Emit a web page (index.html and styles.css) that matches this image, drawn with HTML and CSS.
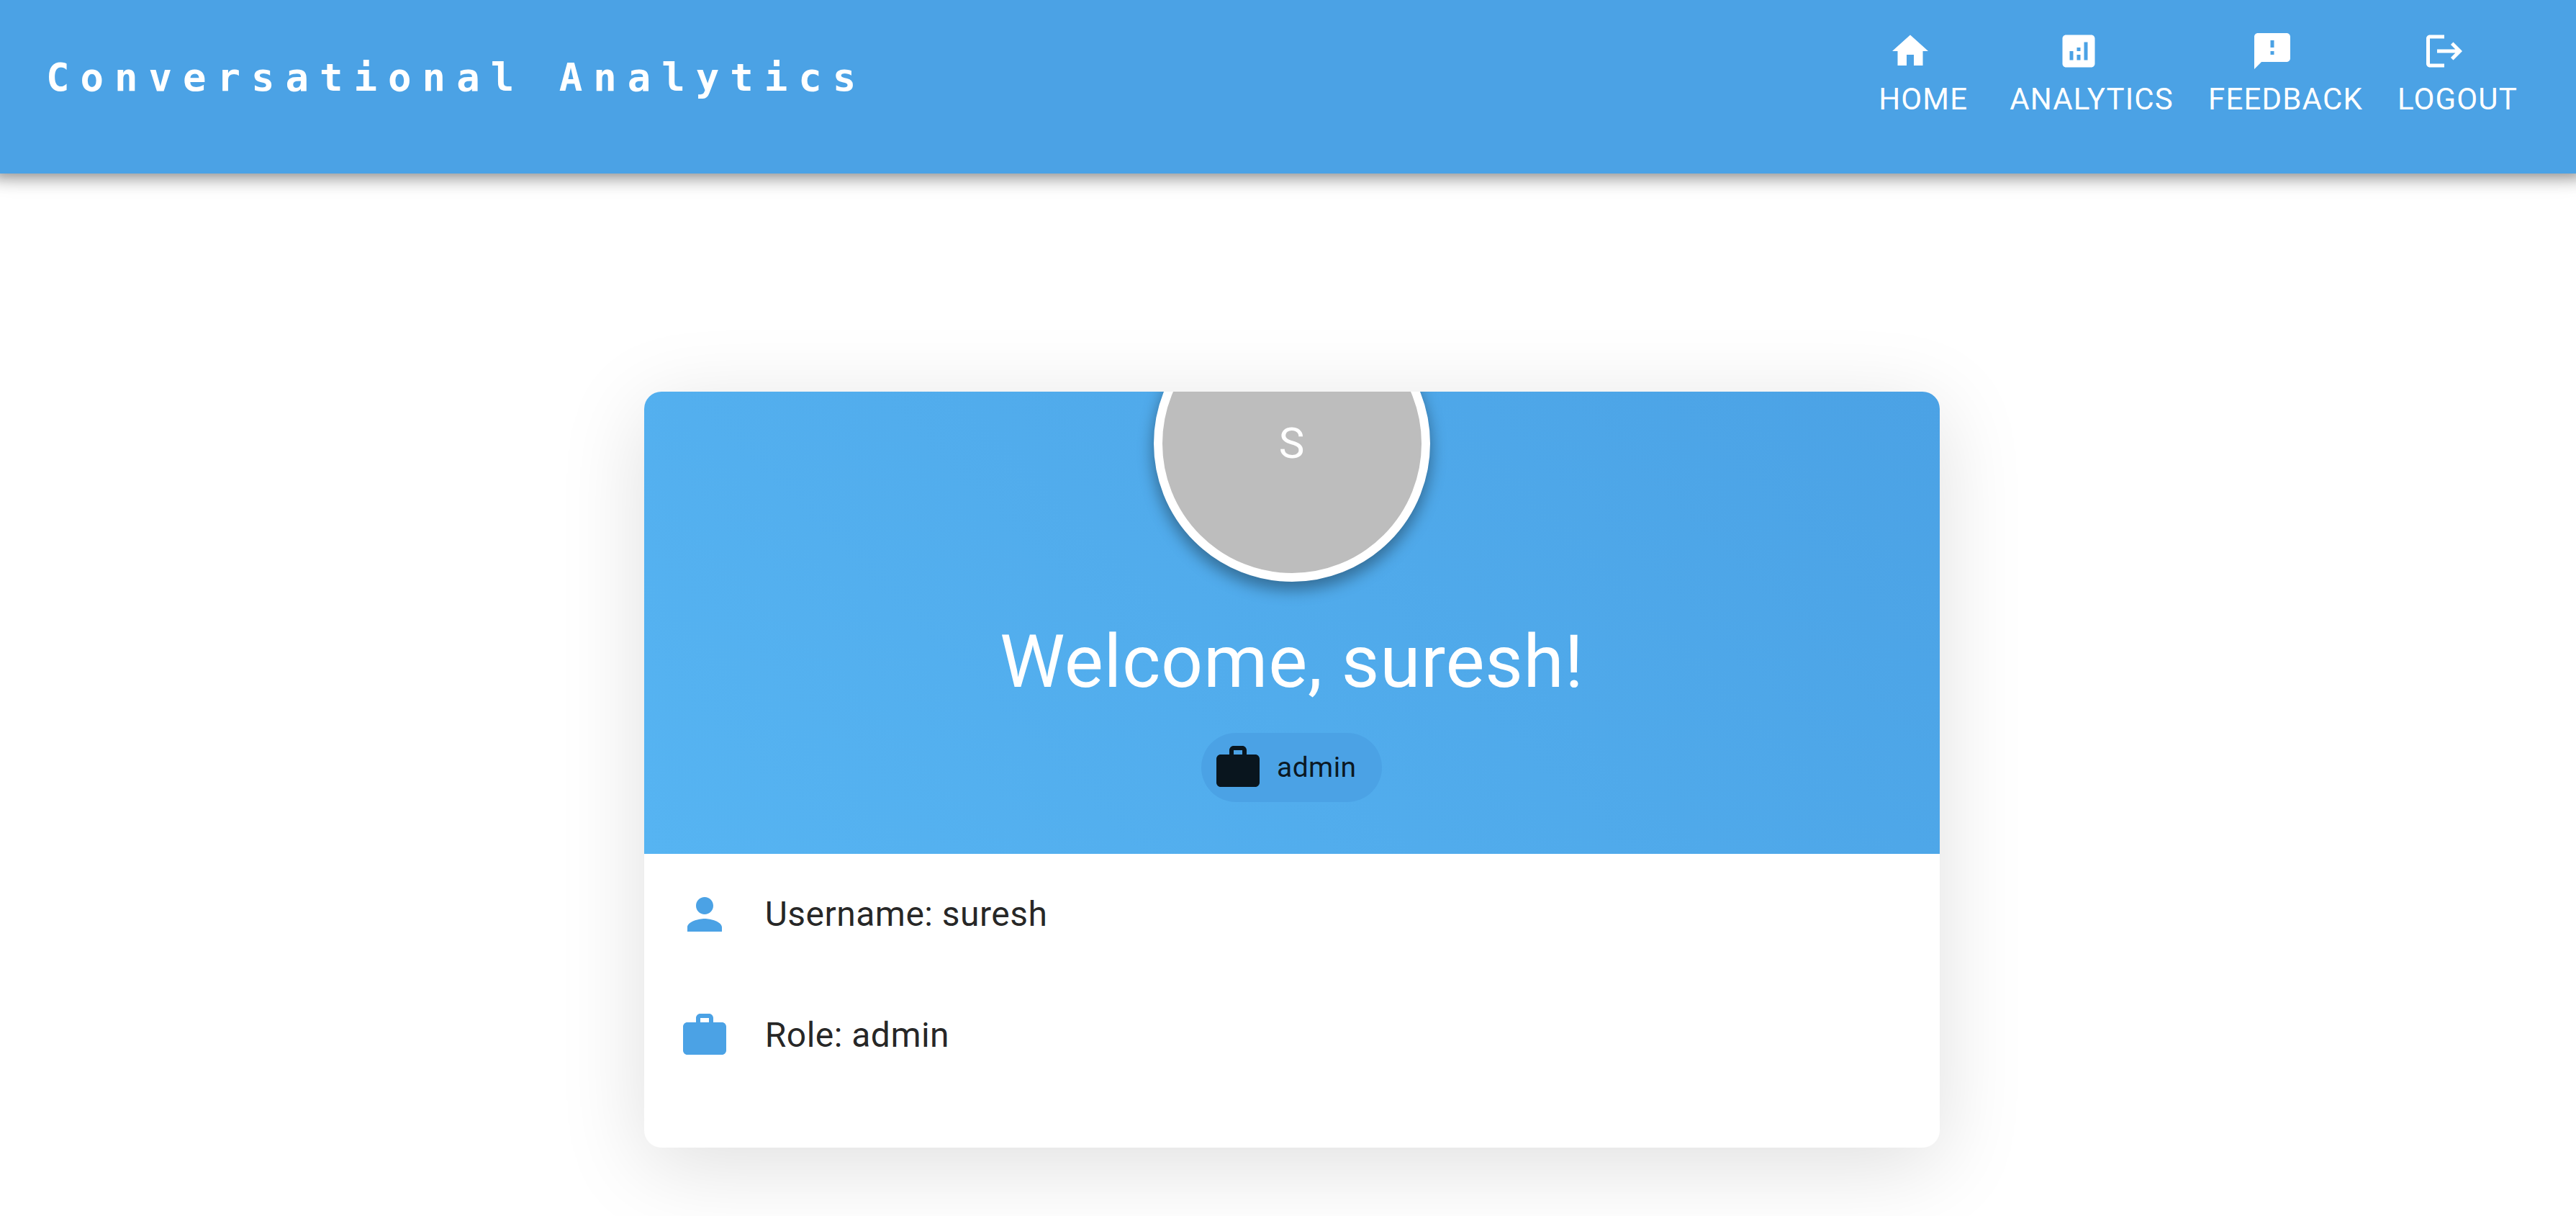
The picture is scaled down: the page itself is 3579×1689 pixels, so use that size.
FILE: index.html
```html
<!DOCTYPE html>
<html lang="en">
<head>
<meta charset="utf-8">
<title>Conversational Analytics</title>
<link rel="stylesheet" href="styles.css">
</head>
<body>
<header class="app-bar">
  <h1 class="brand">Conversational Analytics</h1>
  <nav class="nav">
    <a class="nav-item" href="#home">
      <svg class="nav-icon" viewBox="0 0 24 24" aria-hidden="true"><path d="M10 20v-6h4v6h5v-8h3L12 3 2 12h3v8z"/></svg>
      Home
    </a>
    <a class="nav-item" href="#analytics">
      <svg class="nav-icon" viewBox="0 0 24 24" aria-hidden="true"><path d="M19 3H5c-1.100 0-2 .9-2 2v14c0 1.100.9 2 2 2h14c1.100 0 2-.9 2-2V5c0-1.100-.9-2-2-2zM9 17H7v-5h2v5zm4 0h-2v-3h2v3zm0-5h-2v-2h2v2zm4 5h-2V7h2v10z"/></svg>
      Analytics
    </a>
    <a class="nav-item" href="#feedback">
      <svg class="nav-icon" viewBox="0 0 24 24" aria-hidden="true"><path d="M20 2H4c-1.100 0-1.990.9-1.990 2L2 22l4-4h14c1.100 0 2-.9 2-2V4c0-1.100-.9-2-2-2zm-7 12h-2v-2h2v2zm0-4h-2V6h2v4z"/></svg>
      Feedback
    </a>
    <a class="nav-item" href="#logout">
      <svg class="nav-icon" viewBox="0 0 24 24" aria-hidden="true"><path d="M17 7l-1.410 1.410L18.170 11H8v2h10.170l-2.580 2.580L17 17l5-5zM4 5h8V3H4c-1.100 0-2 .9-2 2v14c0 1.100.9 2 2 2h8v-2H4V5z"/></svg>
      Logout
    </a>
  </nav>
</header>
<main class="page">
  <section class="card">
    <div class="card-header">
      <div class="avatar">S</div>
      <h2 class="welcome">Welcome, suresh!</h2>
      <div class="chip">
        <svg class="icon" viewBox="0 0 24 24" aria-hidden="true"><path d="M20 6h-4V4c0-1.110-.89-2-2-2h-4c-1.110 0-2 .89-2 2v2H4c-1.110 0-1.990.89-1.990 2L2 19c0 1.110.89 2 2 2h16c1.110 0 2-.89 2-2V8c0-1.110-.89-2-2-2zm-6 0h-4V4h4v2z"/></svg>
        <span class="chip-label">admin</span>
      </div>
    </div>
    <ul class="details">
      <li class="detail">
        <svg class="icon" viewBox="0 0 24 24" aria-hidden="true"><path d="M12 12c2.210 0 4-1.790 4-4s-1.790-4-4-4-4 1.790-4 4 1.790 4 4 4zm0 2c-2.670 0-8 1.340-8 4v2h16v-2c0-2.660-5.330-4-8-4z"/></svg>
        <span>Username: suresh</span>
      </li>
      <li class="detail">
        <svg class="icon" viewBox="0 0 24 24" aria-hidden="true"><path d="M20 6h-4V4c0-1.110-.89-2-2-2h-4c-1.110 0-2 .89-2 2v2H4c-1.110 0-1.990.89-1.990 2L2 19c0 1.110.89 2 2 2h16c1.110 0 2-.89 2-2V8c0-1.110-.89-2-2-2zm-6 0h-4V4h4v2z"/></svg>
        <span>Role: admin</span>
      </li>
    </ul>
  </section>
</main>
</body>
</html>
```
FILE: styles.css
```css
* {
  box-sizing: border-box;
}

body {
  margin: 0;
  background: #fff;
  color: rgba(0, 0, 0, 0.87);
  font-family: Roboto, "Liberation Sans", sans-serif;
  font-size: 48px;
  letter-spacing: 0.01em;
}

.app-bar {
  display: flex;
  align-items: center;
  justify-content: space-between;
  padding: 23px 57px 48px 64px;
  background: #4ba2e5;
  color: #fff;
  box-shadow: 0 0 12px 3px rgba(0, 0, 0, 0.2), 0 0 16px 13px rgba(0, 0, 0, 0.16), 0 0 30px 6px rgba(0, 0, 0, 0.12);
}

.brand {
  margin: 0;
  font-family: "DejaVu Sans Mono", monospace;
  font-size: 54px;
  font-weight: 700;
  line-height: 84px;
  letter-spacing: 15px;
}

.nav {
  display: flex;
}

.nav-item {
  display: flex;
  flex-direction: column;
  align-items: center;
  min-width: 192px;
  padding: 18px 24px;
  color: inherit;
  font-size: 42px;
  line-height: 74px;
  letter-spacing: 0.028em;
  text-decoration: none;
  text-transform: uppercase;
}

.nav-icon {
  width: 60px;
  height: 60px;
  margin: 0 24px 0 -12px;
  fill: currentColor;
}

.page {
  padding: 303px 0 95px 25%;
}

.card {
  max-width: 1800px;
  padding-bottom: 72px;
  overflow: hidden;
  border-radius: 24px;
  background: #fff;
  box-shadow: 0 24px 120px rgba(0, 0, 0, 0.13);
}

.card-header {
  display: flex;
  flex-direction: column;
  align-items: center;
  padding-bottom: 72px;
  background: linear-gradient(45deg, #56b4f2, #4ba2e5);
}

.avatar {
  display: flex;
  align-items: center;
  justify-content: center;
  width: 384px;
  height: 384px;
  margin-top: -120px;
  border: 12px solid #fff;
  border-radius: 50%;
  background: #bdbdbd;
  color: #fff;
  font-size: 60px;
  line-height: 60px;
  box-shadow: 0 10px 20px 2px rgba(0, 0, 0, 0.34);
}

.welcome {
  margin: 48px 0 36px;
  color: #fff;
  font-size: 102px;
  font-weight: 400;
  line-height: 126px;
  letter-spacing: 0.007em;
}

.icon {
  flex: none;
  width: 72px;
  height: 72px;
  fill: currentColor;
}

.chip {
  display: flex;
  align-items: center;
  height: 96px;
  padding: 0 36px 0 15px;
  border-radius: 48px;
  background: #4ba2e5;
  font-size: 39px;
  letter-spacing: 0.01em;
}

.chip-label {
  margin-left: 18px;
}

.details {
  margin: 0;
  padding: 0;
  list-style: none;
}

.detail {
  display: flex;
  align-items: center;
  gap: 48px;
  padding: 48px;
  line-height: 72px;
}

.detail .icon {
  color: #4ba2e5;
}
```
